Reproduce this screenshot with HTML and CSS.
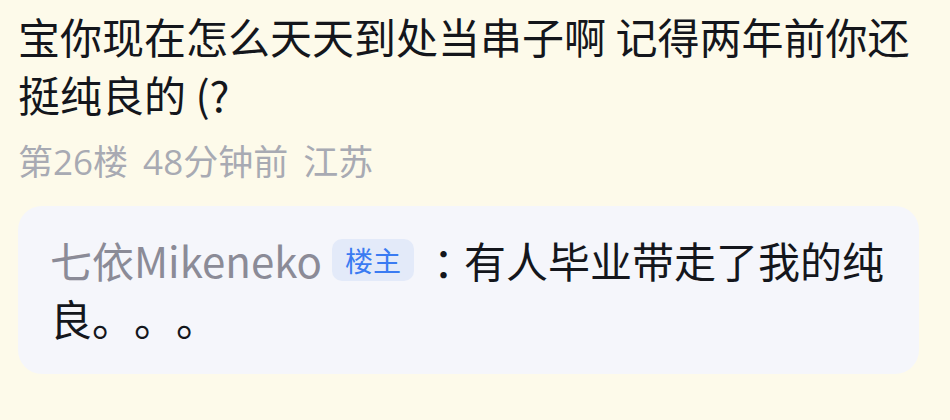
FILE: index.html
```html
<!DOCTYPE html>
<html lang="zh-CN">
<head>
<meta charset="utf-8">
<link rel="stylesheet" href="styles.css">
</head>
<body>
<div class="comment">
  <p class="content">宝你现在怎么天天到处当串子啊 记得两年前你还挺纯良的 (?</p>
  <div class="meta">第26楼 48分钟前 江苏</div>
  <div class="reply">
    <span class="user">七依Mikeneko</span><span class="badge">楼主</span><span class="colon">：</span>有人毕业带走了我的纯良。。。
  </div>
</div>
</body>
</html>
```
FILE: styles.css
```css
html, body {
  margin: 0;
  padding: 0;
  background: #fdfaea;
}
body {
  font-family: "Noto Sans CJK SC", "Noto Sans", sans-serif;
  color: #14161c;
  text-spacing-trim: space-all;
  font-feature-settings: "chws" 0, "halt" 0;
}
.comment {
  padding: 7px 32px 0 18px;
}
.content {
  margin: 0;
  font-size: 42px;
  line-height: 58px;
}
.meta {
  margin-top: 17px;
  font-family: "Open Sans", "Noto Sans CJK SC", sans-serif;
  font-size: 35px;
  line-height: 44px;
  word-spacing: 6px;
  color: #a8aab3;
}
.reply {
  margin-top: 22px;
  margin-right: -1px;
  background: #f5f6fb;
  border-radius: 24px;
  padding: 25px 32px 27px 32px;
  font-size: 42px;
  line-height: 58px;
}
.user {
  color: #8b8b97;
}
.badge {
  display: inline-block;
  vertical-align: top;
  margin: 8px 0 0 10px;
  padding: 0 13px;
  height: 42px;
  line-height: 42px;
  font-size: 28px;
  color: #3a7bf2;
  background: #e3eaf9;
  border-radius: 10px;
}
.colon {
  margin-left: 19px;
  letter-spacing: -11px;
}
```
